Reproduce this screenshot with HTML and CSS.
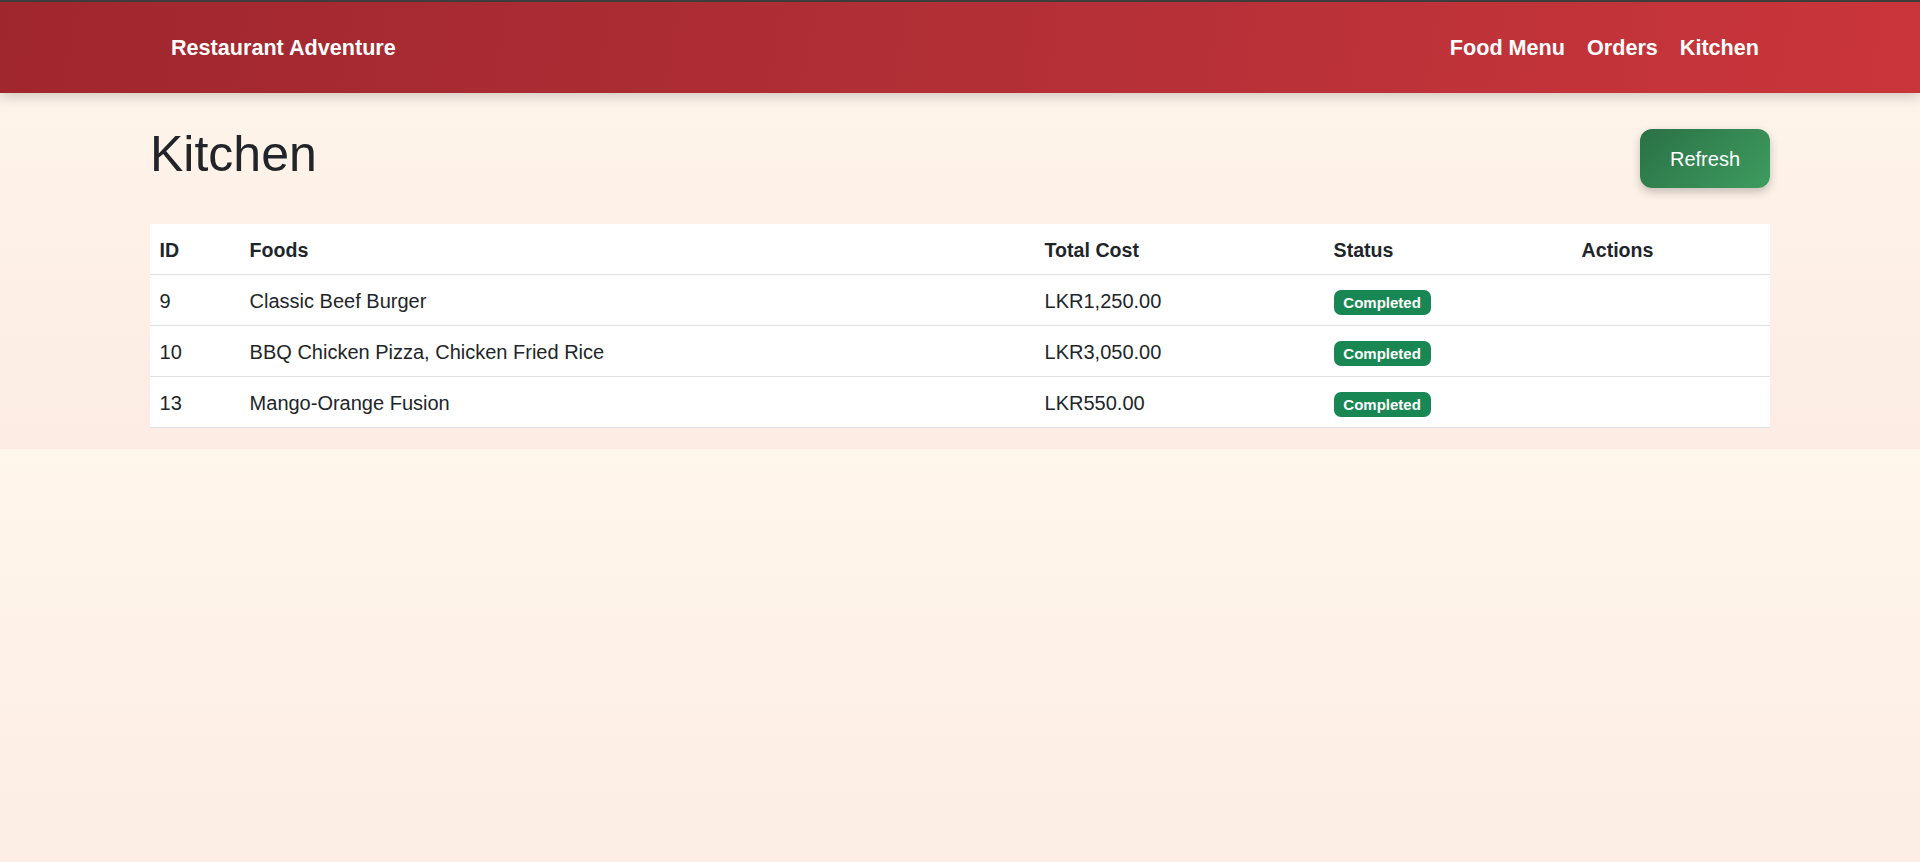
FILE: index.html
```html
<!DOCTYPE html>
<html lang="en">
<head>
<meta charset="utf-8">
<title>Kitchen - Restaurant Adventure</title>
<link rel="stylesheet" href="styles.css">
</head>
<body>
<nav class="navbar">
  <div class="nav-inner">
    <a class="brand" href="#">Restaurant Adventure</a>
    <div class="nav-links">
      <a class="nav-link" href="#">Food Menu</a>
      <a class="nav-link" href="#">Orders</a>
      <a class="nav-link" href="#">Kitchen</a>
    </div>
  </div>
</nav>
<main class="page">
  <div class="page-head">
    <h1 class="title">Kitchen</h1>
    <button class="btn-refresh" type="button">Refresh</button>
  </div>
  <table class="orders">
    <colgroup>
      <col class="c-id"><col class="c-foods"><col class="c-cost"><col class="c-status"><col class="c-actions">
    </colgroup>
    <thead>
      <tr><th>ID</th><th>Foods</th><th>Total Cost</th><th>Status</th><th>Actions</th></tr>
    </thead>
    <tbody>
      <tr><td>9</td><td>Classic Beef Burger</td><td>LKR1,250.00</td><td><span class="badge">Completed</span></td><td></td></tr>
      <tr><td>10</td><td>BBQ Chicken Pizza, Chicken Fried Rice</td><td>LKR3,050.00</td><td><span class="badge">Completed</span></td><td></td></tr>
      <tr><td>13</td><td>Mango-Orange Fusion</td><td>LKR550.00</td><td><span class="badge">Completed</span></td><td></td></tr>
    </tbody>
  </table>
</main>
</body>
</html>
```

FILE: styles.css
```css
body {
  margin: 0;
  font-family: "Liberation Sans", Arial, sans-serif;
  color: #212529;
  background: linear-gradient(180deg, #fff6ec 0%, #fcece3 100%);
}

.navbar {
  height: 91px;
  border-top: 2px solid #3d3d3d;
  background: linear-gradient(100deg, #a0262e 0%, #b22f36 50%, #ca353b 100%);
  box-shadow: 0 4px 12px rgba(0, 0, 0, 0.18);
}

.nav-inner {
  width: 1620px;
  height: 100%;
  margin: 0 auto;
  display: flex;
  align-items: center;
  justify-content: space-between;
}

.brand {
  padding-left: 21px;
  color: #fff;
  font-weight: 700;
  font-size: 21.6px;
  text-decoration: none;
}

.nav-links {
  display: flex;
}

.nav-link {
  padding: 0 11px;
  color: #fff;
  font-weight: 700;
  font-size: 21.6px;
  text-decoration: none;
}

.page {
  width: 1620px;
  margin: 0 auto;
  padding: 31px 0 21px;
}

.page-head {
  display: flex;
  justify-content: space-between;
  align-items: flex-start;
  margin-bottom: 36px;
}

.title {
  margin: 0;
  font-size: 50px;
  font-weight: 400;
  line-height: 60px;
  color: #212529;
}

.btn-refresh {
  margin-top: 5px;
  width: 130px;
  height: 59px;
  border: 0;
  border-radius: 12px;
  background: linear-gradient(135deg, #2a7146 0%, #3e9c5f 100%);
  color: #fff;
  font-family: "Liberation Sans", Arial, sans-serif;
  font-size: 20px;
  padding: 2px 0 0;
  box-shadow: 0 4px 10px rgba(0, 0, 0, 0.22);
  cursor: pointer;
}

.orders {
  width: 1620px;
  table-layout: fixed;
  border-collapse: collapse;
  background: #fff;
  font-size: 20px;
  line-height: 30px;
}

.c-id { width: 90px; }
.c-foods { width: 795px; }
.c-cost { width: 289px; }
.c-status { width: 248px; }
.c-actions { width: 198px; }

.orders th,
.orders td {
  padding: 11px 9.6px 9px;
  text-align: left;
  border-bottom: 1px solid #dee2e6;
  color: #212529;
}

.orders th {
  font-weight: 700;
  font-size: 19.6px;
}

.badge {
  display: inline-block;
  padding: 5px 9.75px;
  border-radius: 7px;
  background: #198754;
  color: #fff;
  font-size: 15px;
  font-weight: 700;
  line-height: 1;
}
```
